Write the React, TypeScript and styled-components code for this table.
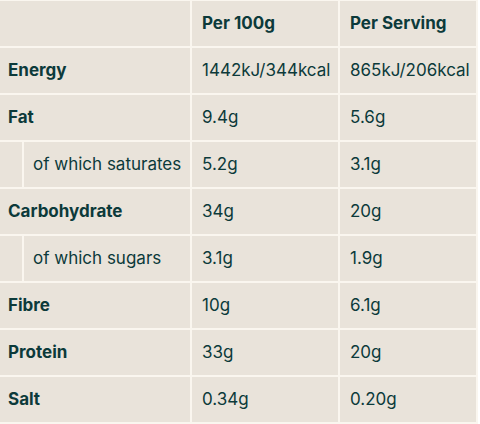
import React from "react";
import styled, { createGlobalStyle } from "styled-components";

const Global = createGlobalStyle`
  html, body { margin: 0; padding: 0; background: #ffffff; }
  body { font-family: "Inter", "Noto Sans", sans-serif; }
`;

const Table = styled.div`
  display: grid;
  grid-template-columns: 190px 146px 136px;
  grid-auto-rows: 45px;
  gap: 2px;
  padding: 1px 2px 2px 0;
  width: max-content;
  background: #faf6ef;
  color: #0c3a3a;
  font-size: 17px;
`;

const Cell = styled.div<{ $bold?: boolean; $first?: boolean }>`
  display: flex;
  align-items: center;
  background: #e9e3da;
  padding-left: ${(p) => (p.$first ? "8px" : "10px")};
  padding-bottom: 2px;
  font-weight: ${(p) => (p.$bold ? 700 : 400)};
  white-space: nowrap;
`;

const SubCell = styled.div`
  display: grid;
  grid-template-columns: 22px 1fr;
  gap: 2px;
  background: #faf6ef;
`;

const Indent = styled.div`
  background: #e9e3da;
`;

const SubLabel = styled.div`
  display: flex;
  align-items: center;
  background: #e9e3da;
  padding-left: 9px;
  padding-bottom: 2px;
  white-space: nowrap;
`;

type Row = { label: string; a: string; b: string; sub?: boolean };

const rows: Row[] = [
  { label: "Energy", a: "1442kJ/344kcal", b: "865kJ/206kcal" },
  { label: "Fat", a: "9.4g", b: "5.6g" },
  { label: "of which saturates", a: "5.2g", b: "3.1g", sub: true },
  { label: "Carbohydrate", a: "34g", b: "20g" },
  { label: "of which sugars", a: "3.1g", b: "1.9g", sub: true },
  { label: "Fibre", a: "10g", b: "6.1g" },
  { label: "Protein", a: "33g", b: "20g" },
  { label: "Salt", a: "0.34g", b: "0.20g" },
];

export default function App() {
  return (
    <>
      <Global />
      <Table>
        <Cell $first />
        <Cell $bold>Per 100g</Cell>
        <Cell $bold>Per Serving</Cell>
        {rows.map((r) => (
          <React.Fragment key={r.label}>
            {r.sub ? (
              <SubCell>
                <Indent />
                <SubLabel>{r.label}</SubLabel>
              </SubCell>
            ) : (
              <Cell $first $bold>
                {r.label}
              </Cell>
            )}
            <Cell>{r.a}</Cell>
            <Cell>{r.b}</Cell>
          </React.Fragment>
        ))}
      </Table>
    </>
  );
}
